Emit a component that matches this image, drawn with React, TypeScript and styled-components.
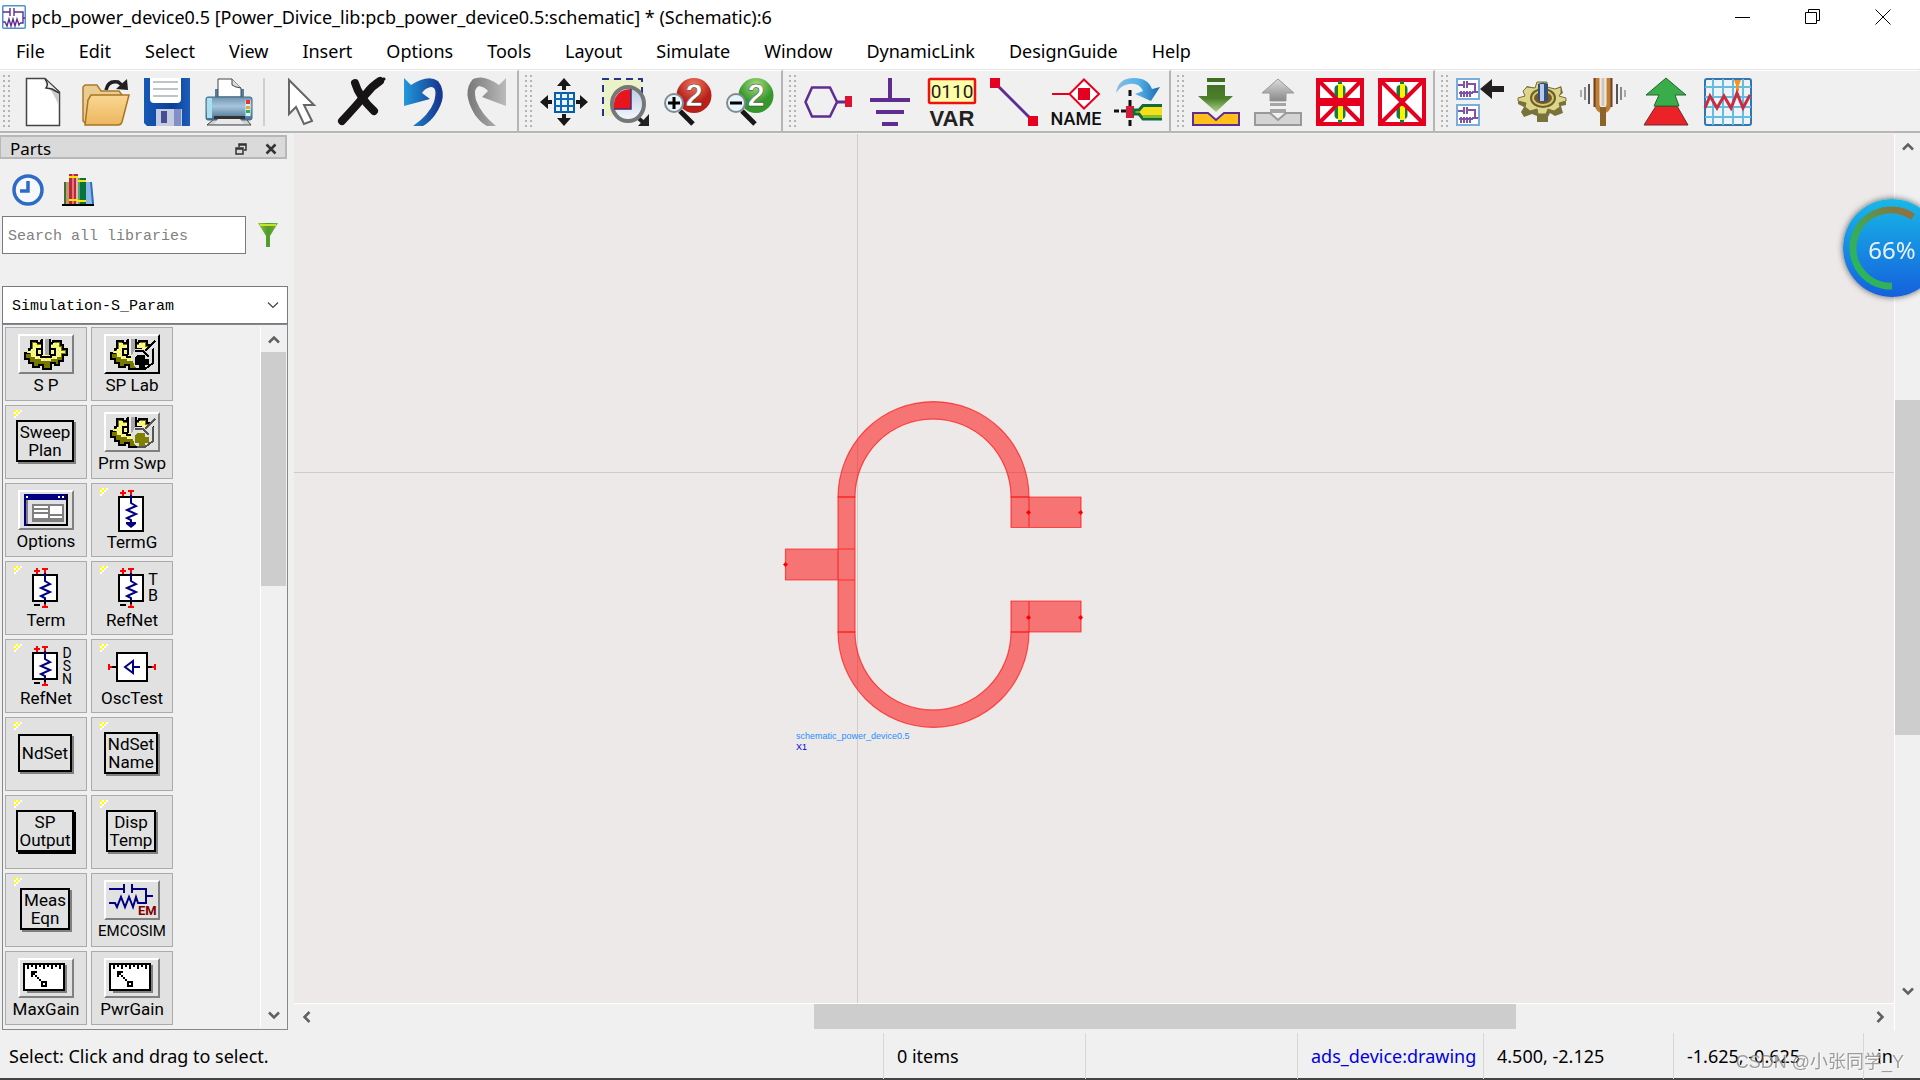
import React from "react";
import styled, { createGlobalStyle } from "styled-components";

const uiFont = `"Noto Sans", "Open Sans", "Noto Sans CJK SC", sans-serif`;
const monoFont = `"Liberation Mono", "DejaVu Sans Mono", monospace`;

const GlobalStyle = createGlobalStyle`
  * { box-sizing: border-box; }
  body { margin: 0; background: #f0f0f0; font-family: ${uiFont}; color: #000; overflow: hidden; }
  button { font: inherit; color: inherit; padding: 0; border: 0; background: none; }
  svg { display: block; }
`;

const Window = styled.div`
  display: flex;
  flex-direction: column;
  height: 100vh;
  border-bottom: 2px solid #454545;
  font-size: 18px;
  line-height: 24px;
`;

/* ---------- title and menus ---------- */

const TitleBar = styled.header`
  display: flex;
  align-items: center;
  height: 34px;
  flex: none;
  padding: 0 2px;
  gap: 5px;
  background: #fff;
`;
const Title = styled.h1`
  flex: 1;
  margin: 0;
  font-size: 18px;
  font-weight: 400;
  line-height: 24px;
  white-space: nowrap;
`;
const WindowControls = styled.div`
  display: flex;
`;
const WindowButton = styled.button`
  display: grid;
  place-items: center;
  width: 70px;
  height: 34px;
`;
const MenuBar = styled.nav`
  display: flex;
  height: 35px;
  flex: none;
  align-items: center;
  padding: 0 0 2px 16px;
  gap: 34px;
  background: #fff;
`;
const MenuItem = styled.button`
  white-space: nowrap;
`;

/* ---------- tool bars ---------- */

const ToolRow = styled.div`
  display: flex;
  gap: 1px;
  height: 64px;
  flex: none;
  border-top: 1px solid #e6e6e6;
  border-bottom: 2px solid #b6b6b6;
`;
const ToolGroup = styled.div<{ $first?: boolean; $fill?: boolean }>`
  display: flex;
  align-items: center;
  gap: 14px;
  padding: 2px 7px 0 ${(p) => (p.$first ? 3 : 5)}px;
  flex: ${(p) => (p.$fill ? "1" : "none")};
  border-top: 1px solid #fff;
  border-right: 2px solid ${(p) => (p.$fill ? "#f0f0f0" : "#b6b6b6")};
`;
const Grip = styled.span`
  width: 7px;
  height: 54px;
  margin-right: -6px;
  background-image: radial-gradient(circle at 1px 1px, #b4b4b4 1px, transparent 1px);
  background-size: 5px 5px;
`;
const ToolButton = styled.button`
  width: 48px;
  height: 48px;
  flex: none;
`;
const Divider = styled.span`
  width: 2px;
  height: 48px;
  margin: 0 -3px;
  background: #cfcfcf;
`;

/* ---------- parts dock ---------- */

const Main = styled.main`
  display: flex;
  flex: 1;
  min-height: 0;
`;
const Dock = styled.aside`
  display: flex;
  flex-direction: column;
  width: 288px;
  margin-right: 6px;
  padding-top: 2px;
  flex: none;
`;
const DockHeader = styled.div`
  display: flex;
  align-items: center;
  gap: 18px;
  height: 24px;
  width: 287px;
  flex: none;
  padding: 4px 8px 0 9px;
  border: 2px solid #b8b8b8;
  border-left-width: 1px;
  background: #dadada;
`;
const DockTitle = styled.h2`
  flex: 1;
  margin: 0;
  font-size: 17px;
  line-height: 20px;
  font-weight: 400;
`;
const LibraryTools = styled.div`
  display: flex;
  gap: 18px;
  padding: 15px 12px 10px;
`;
const SearchRow = styled.div`
  display: flex;
  align-items: center;
  gap: 12px;
  padding: 0 2px 32px;
`;
const SearchBox = styled.input`
  width: 244px;
  height: 38px;
  padding: 3px 5px 0;
  border: 1px solid #7a7a7a;
  border-radius: 0;
  background: #fff;
  font: 15px ${monoFont};
  &::placeholder { color: #808080; opacity: 1; }
`;
const PaletteField = styled.div`
  display: grid;
  margin-left: 2px;
  align-items: center;
  flex: none;
  > * { grid-area: 1 / 1; }
  > svg { justify-self: end; margin-right: 9px; pointer-events: none; }
`;
const PaletteSelect = styled.select`
  appearance: none;
  width: 100%;
  height: 38px;
  padding: 2px 9px 0;
  border: 1px solid #7a7a7a;
  border-radius: 0;
  background: #fff;
  color: #000;
  font: 15px ${monoFont};
`;
const PartsFrame = styled.div`
  display: flex;
  flex: 1;
  min-height: 0;
  margin: 0 0 1px 2px;
  padding: 2px 1px 2px 0;
  border: 1px solid #828790;
`;
const PartsGrid = styled.div`
  display: grid;
  grid-template-columns: repeat(2, 82px);
  grid-auto-rows: 74px;
  gap: 4px;
  flex: 1;
  padding-left: 2px;
  overflow: hidden;
`;
const PartButton = styled.button`
  position: relative;
  display: flex;
  flex-direction: column;
  align-items: center;
  padding-top: 6px;
  border: 1px solid #ababab;
  background: #e1e1e1;
  font-family: Roboto, "Liberation Sans", sans-serif;
  font-size: 17px;
  line-height: 18px;
`;
const NewMark = styled.svg`
  position: absolute;
  left: 8px;
  top: 4px;
`;
const Raised = styled.span<{ $dark?: boolean }>`
  display: grid;
  place-items: center;
  width: 56px;
  height: 40px;
  flex: none;
  border: 2px solid;
  border-color: #fff ${(p) => (p.$dark ? "#000 #000" : "#808080 #808080")} #fff;
`;
const PartLabel = styled.span<{ $small?: boolean }>`
  margin-top: 2px;
  font-size: ${(p) => (p.$small ? 15 : 17)}px;
  white-space: nowrap;
`;
const PartArt = styled.svg`
  overflow: visible;
  flex: none;
`;
const TextPlate = styled.span<{ $width: number; $dark?: boolean; $single?: boolean }>`
  display: grid;
  place-items: center;
  align-content: center;
  width: ${(p) => p.$width}px;
  height: ${(p) => (p.$single ? 38 : 42)}px;
  margin-top: ${(p) => (p.$single ? 10 : 8)}px;
  margin-right: 2px;
  border: 2px solid #000;
  box-shadow: 2px 2px 0 ${(p) => (p.$dark ? "#000" : "#808080")};
  font-size: 17px;
  line-height: 18px;
`;

/* ---------- scroll bars ---------- */

const VBar = styled.div`
  display: flex;
  flex-direction: column;
  width: 26px;
  flex: none;
  border-left: 1px solid #fff;
`;
const HBar = styled.div`
  display: flex;
  height: 28px;
  flex: none;
  padding: 0 2px 2px 0;
  border-top: 1px solid #fff;
`;
const ScrollButton = styled.button`
  display: grid;
  place-items: center;
  width: 25px;
  height: 25px;
  flex: none;
`;
const Track = styled.div<{ $row?: boolean }>`
  display: flex;
  flex-direction: ${(p) => (p.$row ? "row" : "column")};
  flex: 1;
`;
const Space = styled.span<{ $grow: number }>`
  flex: ${(p) => p.$grow} 0 0;
`;
const Thumb = styled.span<{ $grow: number }>`
  flex: ${(p) => p.$grow} 0 0;
  background: #cdcdcd;
`;
const Corner = styled.span`
  height: 28px;
  flex: none;
`;

/* ---------- schematic ---------- */

const Workspace = styled.section`
  display: flex;
  flex: 1;
  min-width: 0;
  padding-top: 1px;
`;
const SheetColumn = styled.div`
  display: flex;
  flex-direction: column;
  flex: 1;
  min-width: 0;
`;
const Sheet = styled.svg`
  flex: 1;
  min-height: 0;
  width: 100%;
  background: #ede9e8;
  font-family: "Liberation Sans", Arial, sans-serif;
  font-size: 9px;
`;

/* ---------- status bar and overlays ---------- */

const StatusBar = styled.footer`
  display: grid;
  grid-template-columns: 1fr 202px 212px 186px 190px 190px 57px;
  height: 47px;
  flex: none;
  padding: 2px 0 1px;
  line-height: 46px;
  white-space: nowrap;
`;
const Status = styled.span<{ $color?: string; $first?: boolean }>`
  padding-left: ${(p) => (p.$first ? 9 : 13)}px;
  border-left: ${(p) => (p.$first ? "0" : "1px solid #d7d7d7")};
  color: ${(p) => p.$color ?? "#000"};
`;
const Watermark = styled.span`
  position: fixed;
  right: 16px;
  bottom: 4px;
  color: rgba(120, 120, 120, 0.7);
  text-shadow: 1px 1px 0 rgba(255, 255, 255, 0.7);
  font: 18px/28px "Liberation Sans", "Noto Sans CJK SC", sans-serif;
`;
const MemoryBall = styled.div`
  position: fixed;
  top: 199px;
  right: -21px;
  width: 98px;
  height: 98px;
  display: grid;
  place-items: center;
  border-radius: 50%;
  background: linear-gradient(#18b8e8, #1560dc);
  box-shadow: 0 0 6px rgba(0, 0, 0, 0.6);
  color: #e8f2ff;
  font-size: 24px;
  > * { grid-area: 1 / 1; }
  > span { padding-top: 4px; }
`;

/* ---------- drawings ---------- */

const purple = "#5f2d91";
const red = "#e6001f";

const Circuit = ({ size = 24, line = purple }: { size?: number; line?: string }) => (
  <svg width={size} height={size} viewBox="0 0 24 24">
    <rect x=".75" y=".75" width="22.5" height="22.5" rx="1" fill="#fff" stroke="#4a93cf" strokeWidth="1.5" />
    <g fill="none" stroke={line} strokeWidth="1.4">
      <path d="M1 7H8M8 3V11M12 3V11M12 7H21V13H23M21 13V18H18M1 17H3L5 21L7 14L9 21L11 14L13 21L15 14L17 20L18 18" />
    </g>
  </svg>
);

const MiniCircuit = ({ y }: { y: number }) => (
  <g transform={`translate(0 ${y})`}>
    <rect x="1" y="1" width="22" height="20" fill="#fff" stroke="#78aedb" strokeWidth="2" />
    <path d="M2 7H8M8 3V10M11 3V10M11 6H19V14H22M19 14H16M3 15H17M5 13V19M8 13V19M11 13V19M14 13V19" fill="none" stroke="#8152a8" strokeWidth="2" />
  </g>
);

const Magnifier = ({ plus }: { plus?: boolean }) => (
  <>
    <circle cx="30" cy="17.500" r="17.500" fill={plus ? "url(#ballRed)" : "url(#ballGreen)"} />
    <text x="30" y="28" textAnchor="middle" fontFamily="Liberation Sans, sans-serif" fontWeight="700" fontSize="31" fill="#fff" stroke="#333" strokeWidth=".5">2</text>
    <path d="M16 33L29 46" stroke="#171717" strokeWidth="5" />
    <circle cx="10" cy="25" r="9" fill="#e5f4fd" stroke="#828b91" strokeWidth="2" />
    <path d={plus ? "M4 25H16M10 19V31" : "M4 25H16"} stroke="#000" strokeWidth="3" />
  </>
);

const Capacitor = ({ y }: { y: number }) => (
  <g transform={`translate(0 ${y})`}>
    <path d="M24 0V20" stroke="#167a45" strokeWidth="4" />
    <rect x="18.500" y="4" width="11" height="12" rx="4" fill="#167a45" />
    <rect x="22" y="3" width="5" height="14" fill="#fff200" />
  </g>
);

const toolIcons: Record<string, React.ReactNode> = {
  New: (
    <>
      <path d="M8.500 .5H27L41.500 14V47.500H8.500Z" fill="#fff" stroke="#444" strokeWidth="1.5" />
      <path d="M24 1L41 17V28Q35 13 24 1Z" fill="#ccc" />
      <path d="M27 1Q31 6 28 10L34 11L41 15" fill="#eee" stroke="#333" strokeWidth="1.5" />
    </>
  ),
  Open: (
    <>
      <path d="M3 9L5 7H17L21 13H39L42 17V24H10L6 46L3 43Z" fill="#e9cd90" stroke="#a97a30" strokeWidth="1.5" />
      <path d="M11 17H49L42 44Q41 47 38 47H5L8 22Z" fill="url(#folder)" stroke="#a97421" strokeWidth="1.5" />
      <path d="M26 12Q28 2 38 4L43 8" fill="none" stroke="#202020" strokeWidth="3.5" />
      <path d="M47 1L48 12L36 11Z" fill="#202020" />
    </>
  ),
  Save: (
    <>
      <path d="M2 0H48V48H5L2 45Z" fill="url(#disk)" />
      <path d="M8 0H39V21Q39 25 35 25H12Q8 25 8 21Z" fill="#fff" />
      <path d="M11 4H36M11 11H36M11 18H36" stroke="#c0c4c7" strokeWidth="2" />
      <rect x="14" y="31" width="26" height="17" fill="#c4cce2" />
      <rect x="32" y="31" width="7" height="17" fill="#8290c6" />
      <rect x="19" y="33" width="6" height="12" fill="#474d91" />
    </>
  ),
  Print: (
    <>
      <path d="M11 20V11H14V20M36 20V11H40V20" fill="#547f9f" />
      <path d="M14 19V1H28L37 10V19Z" fill="#fff" stroke="#444" />
      <path d="M28 1V7L32 9L37 10" fill="#ddd" stroke="#444" />
      <path d="M9 42L13 36H38L43 42L47 47H3Z" fill="#d2d2d2" stroke="#444" />
      <rect x="2" y="19" width="46" height="23" rx="2" fill="url(#printer)" stroke="#3f6b84" />
      <rect x="3" y="20" width="5" height="20" fill="#a9dfee" />
      <path d="M44 22V38" stroke="#d4f4fb" strokeWidth="5" />
      <path d="M44 22V26" stroke="#e33" strokeWidth="4" />
      <path d="M44 28V31" stroke="#e6a640" strokeWidth="4" />
      <path d="M44 32V35" stroke="#38ac55" strokeWidth="4" />
      <path d="M10 38H41V41H10Z" fill="#333" />
      <path d="M10 46L14 41H36L40 46Z" fill="#e8e8e8" />
    </>
  ),
  Pointer: <path d="M13 2V36L20 29L28 46L36 43L28 27H38Z" fill="#fff" stroke="#666" strokeWidth="2" />,
  Delete: (
    <g fill="none" stroke="#171415" strokeLinecap="round">
      <path d="M4 43Q19 27 28 16Q34 8 42 3" strokeWidth="8" />
      <path d="M17 5Q21 19 36 33" strokeWidth="8" />
      <path d="M39 4L46 1" strokeWidth="3" />
    </g>
  ),
  Undo: <path d="M4 0L11 7Q28 -4 38 3Q49 17 35 37Q30 44 23 48H13Q29 37 34 24Q38 9 31 9Q25 10 22 15L30 21L4 28Z" fill="url(#undo)" />,
  Redo: <path d="M44 0L37 7Q22 -4 11 1Q-1 14 13 37Q19 45 25 48H34Q19 36 14 22Q11 10 17 8Q23 9 26 13L20 19L44 28Z" fill="url(#redo)" />,
  Pan: (
    <>
      <g stroke="#171717" strokeWidth="4">
        <path d="M24 4V12M24 36V44M4 24H12M36 24H44" />
      </g>
      <path d="M24 0L31 8H17ZM24 48L31 40H17ZM0 24L8 17V31ZM48 24L40 17V31Z" fill="#171717" />
      <rect x="15" y="15" width="19" height="19" fill="#e7f5ff" stroke="#075aaa" strokeWidth="2" />
      <path d="M21 14V34M28 14V34M14 21H34M14 28H34" stroke="#1268b8" strokeWidth="2" />
    </>
  ),
  "Zoom area": (
    <>
      <rect x="1" y="1" width="39" height="37" fill="#ebf2c8" />
      <path d="M1 38V1H40V16" fill="none" stroke="#26348c" strokeWidth="2" strokeDasharray="7 5" />
      <path d="M34 38L43 46" stroke="#222" strokeWidth="4" />
      <path d="M47 36V48H36Z" fill="#222" />
      <ellipse cx="26" cy="26" rx="16" ry="17" fill="url(#lens)" stroke="#777" strokeWidth="4" />
      <path d="M12 31V26Q13 12 29 11V31Z" fill="#e7151d" />
      <path d="M12 31H29V11" fill="none" stroke="#4b2c72" strokeWidth="1.5" />
    </>
  ),
  "Zoom in": <Magnifier plus />,
  "Zoom out": <Magnifier />,
  Port: (
    <>
      <path d="M1.500 24L8 9.500H26L33 24L26 38.500H8Z" fill="none" stroke={purple} strokeWidth="2.5" />
      <path d="M33 24H41" stroke={purple} strokeWidth="3" />
      <rect x="41" y="18" width="7" height="11" fill="#dc1233" />
    </>
  ),
  Ground: <path d="M24 0V22M4 22H44M10 34H38M16 46H32" stroke={purple} strokeWidth="4" fill="none" />,
  Variable: (
    <>
      <rect x="1" y="1" width="46" height="24" rx="1" fill="#ffffa8" stroke="#ef1111" strokeWidth="2.500" />
      <text x="24" y="20" textAnchor="middle" fontFamily="Roboto, sans-serif" fontSize="19" fill="#222">0110</text>
      <text x="24" y="48" textAnchor="middle" fontFamily="Liberation Sans, sans-serif" fontWeight="700" fontSize="22" fill="#222">VAR</text>
    </>
  ),
  Wire: (
    <>
      <path d="M6 6L43 43" stroke={purple} strokeWidth="3" />
      <path d="M0 0H10V10H0ZM38 38H48V48H38Z" fill={red} />
    </>
  ),
  Name: (
    <>
      <path d="M0 16H17" stroke={red} strokeWidth="2" />
      <path d="M32 1.500L47 16L32 30.500L17.500 16Z" fill="#fff" stroke={red} strokeWidth="2" />
      <rect x="26" y="10" width="12" height="12" fill={red} />
      <text x="24" y="47" textAnchor="middle" fontFamily="Roboto, sans-serif" fontSize="18" fontWeight="500" fill="#111">NAME</text>
    </>
  ),
  "Swap component": (
    <>
      <path d="M2 15Q4 0 20 0Q34 0 38 11L46 9L37 23L21 16L29 13Q25 4 15 6Q7 7 2 15Z" fill="url(#swap)" />
      <path d="M16 12V48" stroke="#111" strokeWidth="3" strokeDasharray="6 4" />
      <path d="M0 33H12" stroke="#111" strokeWidth="3" strokeDasharray="5 2" />
      <rect x="12" y="28" width="8" height="12" fill="#d51b36" />
      <path d="M48 27.500H29L25 32H20V36H25L29 41H48" fill="#f4df19" stroke="#136b3b" strokeWidth="3" />
      <path d="M29 37H48V40H29Z" fill="#8abb30" />
    </>
  ),
  "Push into": (
    <>
      <path d="M15 0H33V4H15ZM15 7H33V18H41L24 34L6 18H15Z" fill="url(#push)" />
      <path d="M1 35H16L24 42L32 35H47V47H1Z" fill="#ffc01b" stroke={purple} strokeWidth="2" />
    </>
  ),
  "Pop out": (
    <>
      <path d="M24 1L40 15H32V23H16V15H8Z" fill="url(#pop)" stroke="#999" />
      <path d="M16 25H32V28H16ZM16 31H32V35H16Z" fill="#a4a4a4" />
      <path d="M1 35H16L24 42L32 35H47V47H1Z" fill="#d4d4d4" stroke="#999" strokeWidth="2" />
    </>
  ),
  Deactivate: (
    <>
      <rect x="2" y="2" width="44" height="44" fill="#fff" stroke={red} strokeWidth="4" />
      <path d="M3 3L45 45M45 3L3 45" stroke={red} strokeWidth="4" />
      <Capacitor y={3} />
      <Capacitor y={25} />
      <path d="M2 24H46" stroke={red} strokeWidth="8" />
    </>
  ),
  "Deactivate short": (
    <>
      <rect x="2" y="2" width="44" height="44" fill="#fff" stroke={red} strokeWidth="4" />
      <Capacitor y={3} />
      <Capacitor y={25} />
      <path d="M3 3L45 45M45 3L3 45" stroke={red} strokeWidth="4" />
    </>
  ),
  "Set up": (
    <>
      <MiniCircuit y={0} />
      <MiniCircuit y={26} />
      <path d="M24 11L36 1V8H48V14H36V21Z" fill="#231f20" />
    </>
  ),
  Simulate: (
    <>
      <path d="M19 4H29V9L37 11L43 8L45 15L41 18L48 20V27L43 28L45 35L37 38L32 35L30 39V44H19V38L14 36L6 39L3 34L6 29L0 26V20L7 18L5 13L9 8L17 10Z" fill="#77733b" />
      <path d="M19 4H29V9L37 11L43 9L43 15L41 18L48 20V23L41 25L42 29L36 33L30 31L28 36H20L19 31L12 33L7 29L8 25L0 23V20L7 18L5 13L9 9L17 10Z" fill="#dfd58a" stroke="#797239" />
      <ellipse cx="25" cy="20" rx="12" ry="9" fill="#d3c966" stroke="#67602e" strokeWidth="2" />
      <ellipse cx="25" cy="20" rx="9" ry="6" fill="#735929" />
      <path d="M20 6Q25 3 30 6V22Q25 26 20 22Z" fill="#355078" />
      <path d="M22 6H26V23H22Z" fill="#b7caeb" />
    </>
  ),
  Tune: (
    <>
      <path d="M17 0V27Q18 32 23 33Q28 32 29 27V0" fill="none" stroke="#bd8033" strokeWidth="5" />
      <path d="M23 0V28" stroke="#f7e7d5" strokeWidth="6" />
      <path d="M23 0V28" stroke="#c8c8cc" strokeWidth="3" />
      <path d="M14.500 0V29M31.500 0V29" stroke="#753d23" strokeWidth="2" />
      <path d="M23 29V48" stroke="#8a642c" strokeWidth="6" />
      <path d="M9 6V26M37 6V26" stroke="#555" strokeWidth="2" />
      <path d="M5 9V22M41 9V22" stroke="#888" strokeWidth="2" />
      <path d="M1 12V19M45 12V19" stroke="#aaa" strokeWidth="2" />
    </>
  ),
  Optimize: (
    <>
      <path d="M14 28H35L46 47H2Z" fill="#eb2228" stroke="#6c2a26" />
      <path d="M24 0L44 17H33L37 28H12L17 17H4Z" fill="#38ad49" stroke="#29632f" />
    </>
  ),
  "Data display": (
    <>
      <rect x="1" y="1" width="46" height="46" rx="2" fill="#edf3f7" stroke="#3475ae" strokeWidth="2" />
      <path d="M9 1V47M19 1V47M29 1V47M39 1V47M1 9H47M1 19H47M1 29H47M1 39H47" stroke="#65bcdf" strokeWidth="2" />
      <path d="M30 2H37L35 7V13H32V7Z" fill="#f8941d" />
      <path d="M1 30L6 18L13 30L20 18L27 30L33 15L39 30L46 17" fill="none" stroke="#c92c41" strokeWidth="3" />
    </>
  ),
};

const DefsSvg = styled.svg`
  position: absolute;
`;

const Gradients = () => (
  <DefsSvg width="0" height="0" aria-hidden="true">
    <defs>
      <linearGradient id="folder" x2="0" y2="1"><stop stopColor="#f9d792" /><stop offset="1" stopColor="#edb660" /></linearGradient>
      <linearGradient id="disk"><stop stopColor="#1559b5" /><stop offset=".6" stopColor="#0c3f98" /><stop offset="1" stopColor="#1d5dbb" /></linearGradient>
      <linearGradient id="printer" x2="0" y2="1"><stop stopColor="#6d94b1" /><stop offset=".4" stopColor="#a7c6dc" /><stop offset="1" stopColor="#426c8c" /></linearGradient>
      <linearGradient id="undo"><stop stopColor="#2199dc" /><stop offset=".9" stopColor="#173a91" /></linearGradient>
      <linearGradient id="redo"><stop stopColor="#777" /><stop offset="1" stopColor="#bbb" /></linearGradient>
      <linearGradient id="lens" x2="0" y2="1"><stop stopColor="#b9cbe4" /><stop offset="1" stopColor="#f4f8fb" /></linearGradient>
      <radialGradient id="ballRed" cy=".2"><stop stopColor="#ee795f" /><stop offset="1" stopColor="#b9201a" /></radialGradient>
      <radialGradient id="ballGreen" cy=".2"><stop stopColor="#a2dc7b" /><stop offset="1" stopColor="#36972d" /></radialGradient>
      <linearGradient id="swap"><stop stopColor="#8abbe2" /><stop offset=".5" stopColor="#56b3e8" /><stop offset="1" stopColor="#1b68ad" /></linearGradient>
      <linearGradient id="push" x2="0" y2="1"><stop stopColor="#3c6d22" /><stop offset=".6" stopColor="#4c7f2c" /><stop offset="1" stopColor="#a9d184" /></linearGradient>
      <linearGradient id="pop" x2="0" y2="1"><stop stopColor="#ddd" /><stop offset="1" stopColor="#888" /></linearGradient>
      <linearGradient id="level" x1="1" y1="0" x2="0" y2="1"><stop offset=".1" stopColor="#8b7440" /><stop offset=".6" stopColor="#3aaa57" /><stop offset="1" stopColor="#22bd5d" /></linearGradient>
      <linearGradient id="funnel"><stop stopColor="#98c33b" /><stop offset=".5" stopColor="#4d992c" /><stop offset="1" stopColor="#79b33a" /></linearGradient>
      <pattern id="dither" width="4" height="4" patternUnits="userSpaceOnUse"><path d="M0 0H4V4H0Z" fill="#fff" /><path d="M0 0H2V2H0ZM2 2H4V4H2Z" fill="#ff0" /></pattern>
    </defs>
  </DefsSvg>
);

const Tool = ({ name }: { name: string }) => (
  <ToolButton type="button" aria-label={name}>
    <svg width="48" height="48" viewBox="0 0 48 48" overflow="visible">{toolIcons[name]}</svg>
  </ToolButton>
);

const Chevron = ({ turn }: { turn: number }) => (
  <svg width="14" height="14" viewBox="0 0 14 14">
    <path d="M2 9.500L7 4.500L12 9.500" transform={`rotate(${turn} 7 7)`} fill="none" stroke="#606060" strokeWidth="2.500" />
  </svg>
);

const GearArt = ({ wrench, pale }: { wrench?: boolean; pale?: boolean }) => (
  <svg width="50" height="34" viewBox="0 0 50 34" shapeRendering="crispEdges">
    <path d="M10 4H16V6H20V4H28V6H32V4H40V8H42V12H46V18H42V24H38V28H34V26H30V32H22V28H18V30H12V26H8V22H4V16H8V12H10Z" fill="#777700" stroke="#000" strokeWidth="2" />
    <path d="M12 6H16V8H32V6H38V10H40V14H44V16H40V20H36V22H30V24H20V22H14V20H10V16H6V14H10V12H12Z" fill="url(#dither)" />
    <path d="M20 12H16V18H20V20H30V18H34V12H30" fill="none" stroke="#000" strokeWidth="2" />
    <path d="M20 2H30V18H20Z" fill="#000" />
    <path d="M22 2H28V18H22Z" fill="#a8a8a8" />
    <path d="M22 2H24V18H22Z" fill="#eee" />
    {wrench && (
      <>
        <path d="M50 0L38 12H28L24 20L28 30L38 34L46 28V12Z" fill="#e1e1e1" />
        <path d="M30 18H38V22H42V28H38V32H32V28H28V20Z" fill={pale ? "#808000" : "#000"} />
        <path d="M48 4L38 14M28 14H36L42 20M46 12V26L38 32H30" fill="none" stroke={pale ? "#555" : "#000"} strokeWidth="2" />
      </>
    )}
  </svg>
);

const DialogArt = () => (
  <svg width="44" height="32" viewBox="0 0 44 32" shapeRendering="crispEdges">
    <rect width="44" height="32" fill="#000" />
    <path d="M0 0H42V6H4V32H0Z" fill="navy" />
    <path d="M2 2H4V4H2ZM34 2H36V4H34ZM38 2H40V4H38Z" fill="#fff" />
    <path d="M4 6H42V30H4Z" fill="#e1e1e1" />
    <path d="M2 6H4V30H2Z" fill="#808080" />
    <path d="M8 10H40V28H8Z" fill="#808080" />
    <path d="M10 12H24V14H10ZM10 16H24V18H10ZM10 20H24V24H10ZM26 12H38V20H26ZM26 22H38V24H26Z" fill="#fff" />
  </svg>
);

const MeterArt = () => (
  <svg width="46" height="30" viewBox="0 0 46 30" shapeRendering="crispEdges">
    <path d="M4 2H44V30H4Z" fill="#808080" />
    <rect x="1" y="1" width="40" height="26" fill="#fff" stroke="#000" strokeWidth="2" />
    <path d="M5 1V6M9 1V4M13 1V6M17 1V4M21 1V6M25 1V4M29 1V6M33 1V4M37 1V6" stroke="#000" strokeWidth="2" />
    <path d="M8 8H14V10H12V12H14V14H16V16H18V18H20V20H18V18H16V16H14V14H12V12H10V14H8Z" fill="#000" />
    <rect x="19" y="19" width="4" height="4" fill="#fff" stroke="#000" strokeWidth="2" />
  </svg>
);

const EmArt = () => (
  <PartArt width="50" height="34" viewBox="0 0 50 34">
    <path d="M2 6H17M17 1V10M25 1V10M25 6H39V20H31L29 14L26 24L22 14L18 24L14 14L10 24L8 20H2M39 13H46" fill="none" stroke="navy" strokeWidth="2" />
    <text x="31" y="32" fontFamily="Roboto, sans-serif" fontWeight="700" fontSize="13" fill="#800000">EM</text>
  </PartArt>
);

const ResistorArt = ({ side = "", grounded }: { side?: string; grounded?: boolean }) => (
  <PartArt width="80" height="41" viewBox="0 0 80 41">
    <path d="M28 3H34M31 0V6M36 1H42M39 1V6" stroke="#f00" strokeWidth="2" />
    <rect x="27" y="7" width="24" height={grounded ? 34 : 26} fill="#fff" stroke="#000" strokeWidth="2" />
    <path d="M39 5V13L44 16L35 20L44 24L35 28L39 30V33" fill="none" stroke="navy" strokeWidth="2" />
    {grounded ? (
      <path d="M34 32H44V34L39 38L34 34Z" fill="navy" />
    ) : (
      <>
        <path d="M28 37H34M39 33V37" stroke="#000" strokeWidth="2" />
        <path d="M36 39H42M39 36V40" stroke="#f00" strokeWidth="2" />
      </>
    )}
    {[...side].map((letter, i) => (
      <text key={letter} x="61" y={side.length === 2 ? 17 + i * 16 : 12 + i * 13} textAnchor="middle" fontSize={side.length === 2 ? 16 : 14}>
        {letter}
      </text>
    ))}
  </PartArt>
);

const OscArt = () => (
  <PartArt width="80" height="41" viewBox="0 0 80 41">
    <path d="M17 21H63M17 18V24M63 18V24" stroke="#f00" strokeWidth="2" />
    <path d="M20 21H60" stroke="#000" strokeWidth="2" />
    <rect x="25" y="7" width="30" height="28" fill="#fff" stroke="#000" strokeWidth="2" />
    <path d="M33 21L41 15V27ZM41 21H48" fill="none" stroke="navy" strokeWidth="2" />
  </PartArt>
);

/* ---------- parts catalogue ---------- */

type Part = { label?: string; art?: React.ReactNode; raised?: boolean; dark?: boolean; small?: boolean; lines?: string[]; width?: number };

const parts: Part[] = [
  { label: "S P", art: <GearArt />, raised: true },
  { label: "SP Lab", art: <GearArt wrench />, raised: true, dark: true },
  { lines: ["Sweep", "Plan"], width: 58 },
  { label: "Prm Swp", art: <GearArt wrench pale />, raised: true },
  { label: "Options", art: <DialogArt />, raised: true },
  { label: "TermG", art: <ResistorArt grounded /> },
  { label: "Term", art: <ResistorArt /> },
  { label: "RefNet", art: <ResistorArt side="TB" /> },
  { label: "RefNet", art: <ResistorArt side="DSN" /> },
  { label: "OscTest", art: <OscArt /> },
  { lines: ["NdSet"], width: 54 },
  { lines: ["NdSet", "Name"], width: 54 },
  { lines: ["SP", "Output"], width: 58, dark: true },
  { lines: ["Disp", "Temp"], width: 50 },
  { lines: ["Meas", "Eqn"], width: 50 },
  { label: "EMCOSIM", art: <EmArt />, raised: true, small: true },
  { label: "MaxGain", art: <MeterArt />, raised: true },
  { label: "PwrGain", art: <MeterArt />, raised: true },
];

const PartCell = ({ part }: { part: Part }) => (
  <PartButton type="button">
    {!part.raised && (
      <NewMark width="8" height="8" viewBox="0 0 8 8" shapeRendering="crispEdges">
        <path d="M0 0H8V2H6V4H4V6H2V8H0Z" fill="url(#dither)" />
      </NewMark>
    )}
    {part.lines ? (
      <TextPlate $width={part.width ?? 54} $dark={part.dark} $single={part.lines.length === 1}>
        {part.lines.map((line) => <span key={line}>{line}</span>)}
      </TextPlate>
    ) : (
      <>
        {part.raised ? <Raised $dark={part.dark}>{part.art}</Raised> : part.art}
        <PartLabel $small={part.small}>{part.label}</PartLabel>
      </>
    )}
  </PartButton>
);

const Schematic = () => (
  <Sheet role="img" aria-label="Power divider schematic">
    <path d="M0 338.500H4000M563.500 0V4000" stroke="#cfcbca" />
    <g fill="rgba(255,0,0,.5)" stroke="rgba(255,0,0,.6)" strokeWidth="1.2">
      <path d="M544 363A95 95 0 0 1 735 363H717A78 78 0 0 0 561 363Z" />
      <path d="M544 498A95 95 0 0 0 735 498H717A78 78 0 0 1 561 498Z" />
      <path d="M544 363H561V415H544ZM544 415H561V446H544ZM544 446H561V498H544ZM491.500 415H544V446H491.500Z" />
      <path d="M717 363H735V393.500H717ZM735 363H787V393.500H735ZM717 467H735V498H717ZM735 467H787V498H735Z" />
    </g>
    <path d="M489 430.500L491.500 428L494 430.500L491.500 433ZM732 378.500L734.500 376L737 378.500L734.500 381ZM732 483.500L734.500 481L737 483.500L734.500 486ZM784 378.500L787 376L789 378.500L787 381ZM784 483.500L787 481L789 483.500L787 486Z" fill="#f00" />
    <text x="502" y="605" fill="#1e90ff">schematic_power_device0.5</text>
    <text x="502" y="616" fill="#0000e0">X1</text>
  </Sheet>
);

const menus = ["File", "Edit", "Select", "View", "Insert", "Options", "Tools", "Layout", "Simulate", "Window", "DynamicLink", "DesignGuide", "Help"];
const toolGroups = [
  ["New", "Open", "Save", "Print", "|", "Pointer", "Delete", "Undo", "Redo"],
  ["Pan", "Zoom area", "Zoom in", "Zoom out"],
  ["Port", "Ground", "Variable", "Wire", "Name", "Swap component"],
  ["Push into", "Pop out", "Deactivate", "Deactivate short"],
  ["Set up", "Simulate", "Tune", "Optimize", "Data display"],
];

export default function App() {
  return (
    <Window>
      <GlobalStyle />
      <Gradients />
      <TitleBar>
        <Circuit />
        <Title>pcb_power_device0.5 [Power_Divice_lib:pcb_power_device0.5:schematic] * (Schematic):6</Title>
        <WindowControls>
          <WindowButton type="button" aria-label="Minimize">
            <svg width="16" height="16"><path d="M0 8.500H15" stroke="#000" /></svg>
          </WindowButton>
          <WindowButton type="button" aria-label="Restore">
            <svg width="16" height="16"><path d="M.5 3.500H11.500V14.500H.5ZM3.500 3V.5H14.500V11.500H12" fill="none" stroke="#000" /></svg>
          </WindowButton>
          <WindowButton type="button" aria-label="Close">
            <svg width="16" height="16"><path d="M.5 .5L15.500 15.500M15.500 .5L.5 15.500" stroke="#000" /></svg>
          </WindowButton>
        </WindowControls>
      </TitleBar>
      <MenuBar>
        {menus.map((menu) => <MenuItem type="button" key={menu}>{menu}</MenuItem>)}
      </MenuBar>
      <ToolRow>
        {toolGroups.map((group, i) => (
          <ToolGroup key={group[0]} $first={i === 0} $fill={i === toolGroups.length - 1}>
            <Grip />
            {group.map((name) => (name === "|" ? <Divider key={name} /> : <Tool key={name} name={name} />))}
          </ToolGroup>
        ))}
      </ToolRow>
      <Main>
        <Dock>
          <DockHeader>
            <DockTitle>Parts</DockTitle>
            <button type="button" aria-label="Float panel">
              <svg width="12" height="12"><path d="M1 5H8V11H1ZM4 4V1H11V7H9M4 2H11M1 6H8" fill="none" stroke="#333" strokeWidth="1.500" /></svg>
            </button>
            <button type="button" aria-label="Close panel">
              <svg width="12" height="12"><path d="M1.500 1.500L10.500 10.500M10.500 1.500L1.500 10.500" stroke="#333" strokeWidth="2.500" /></svg>
            </button>
          </DockHeader>
          <LibraryTools>
            <button type="button" aria-label="Recent parts">
              <svg width="32" height="32">
                <circle cx="16" cy="16" r="14" fill="#f5f8fc" stroke="#2e6bc5" strokeWidth="3.500" />
                <path d="M16 7V17H8" fill="none" stroke="#2e6bc5" strokeWidth="3.500" />
              </svg>
            </button>
            <button type="button" aria-label="Libraries">
              <svg width="32" height="32">
                <path d="M2 8H4V30H2Z" fill="#3c6f3c" /><path d="M4 8H7V30H4Z" fill="#bd9c68" />
                <path d="M7 0H16V30H7Z" fill="#b6283a" /><path d="M10 0H12V30H10Z" fill="#e9737d" /><path d="M14 3H16V30H14Z" fill="#e9b9a6" />
                <path d="M16 4H24V30H16Z" fill="#0a713f" /><path d="M16 4H18V30H16Z" fill="#4da878" />
                <path d="M24 8L29 8L32 30H24Z" fill="#8db8ec" /><path d="M28 8L30 8L32 30H30Z" fill="#2c70b8" />
                <path d="M7 3H16M7 26H16M16 7H24M16 27H24" stroke="#ffe600" strokeWidth="2" />
                <path d="M0 31H32" stroke="#000" strokeWidth="2" />
              </svg>
            </button>
          </LibraryTools>
          <SearchRow>
            <SearchBox type="text" aria-label="Search all libraries" placeholder="Search all libraries" />
            <button type="button" aria-label="Filter">
              <svg width="20" height="26"><path d="M0 1H20L12 14V25H8V14Z" fill="url(#funnel)" /><path d="M2 3H18" stroke="#c9e32d" strokeWidth="2" /></svg>
            </button>
          </SearchRow>
          <PaletteField>
            <PaletteSelect aria-label="Palette" defaultValue="sparam">
              <option value="sparam">Simulation-S_Param</option>
            </PaletteSelect>
            <svg width="12" height="12"><path d="M1 3.500L6 8.500L11 3.500" fill="none" stroke="#444" strokeWidth="1.200" /></svg>
          </PaletteField>
          <PartsFrame>
            <PartsGrid>
              {parts.map((part, i) => <PartCell key={i} part={part} />)}
            </PartsGrid>
            <VBar>
              <ScrollButton type="button" aria-label="Scroll parts up"><Chevron turn={0} /></ScrollButton>
              <Track><Thumb $grow={234} /><Space $grow={416} /></Track>
              <ScrollButton type="button" aria-label="Scroll parts down"><Chevron turn={180} /></ScrollButton>
            </VBar>
          </PartsFrame>
        </Dock>
        <Workspace>
          <SheetColumn>
            <Schematic />
            <HBar>
              <ScrollButton type="button" aria-label="Scroll left"><Chevron turn={270} /></ScrollButton>
              <Track $row><Space $grow={495} /><Thumb $grow={702} /><Space $grow={351} /></Track>
              <ScrollButton type="button" aria-label="Scroll right"><Chevron turn={90} /></ScrollButton>
            </HBar>
          </SheetColumn>
          <VBar>
            <ScrollButton type="button" aria-label="Scroll up"><Chevron turn={0} /></ScrollButton>
            <Track><Space $grow={241} /><Thumb $grow={334} /><Space $grow={243} /></Track>
            <ScrollButton type="button" aria-label="Scroll down"><Chevron turn={180} /></ScrollButton>
            <Corner />
          </VBar>
        </Workspace>
      </Main>
      <StatusBar>
        <Status $first>Select: Click and drag to select.</Status>
        <Status>0 items</Status>
        <Status />
        <Status $color="#0000e0">ads_device:drawing</Status>
        <Status>4.500, -2.125</Status>
        <Status>-1.625, -0.625</Status>
        <Status>in</Status>
      </StatusBar>
      <Watermark>CSDN @小张同学_Y</Watermark>
      <MemoryBall>
        <svg width="98" height="98">
          <path d="M70 18A38 38 0 1 0 49 87" fill="none" stroke="url(#level)" strokeWidth="7" />
        </svg>
        <span>66%</span>
      </MemoryBall>
    </Window>
  );
}
